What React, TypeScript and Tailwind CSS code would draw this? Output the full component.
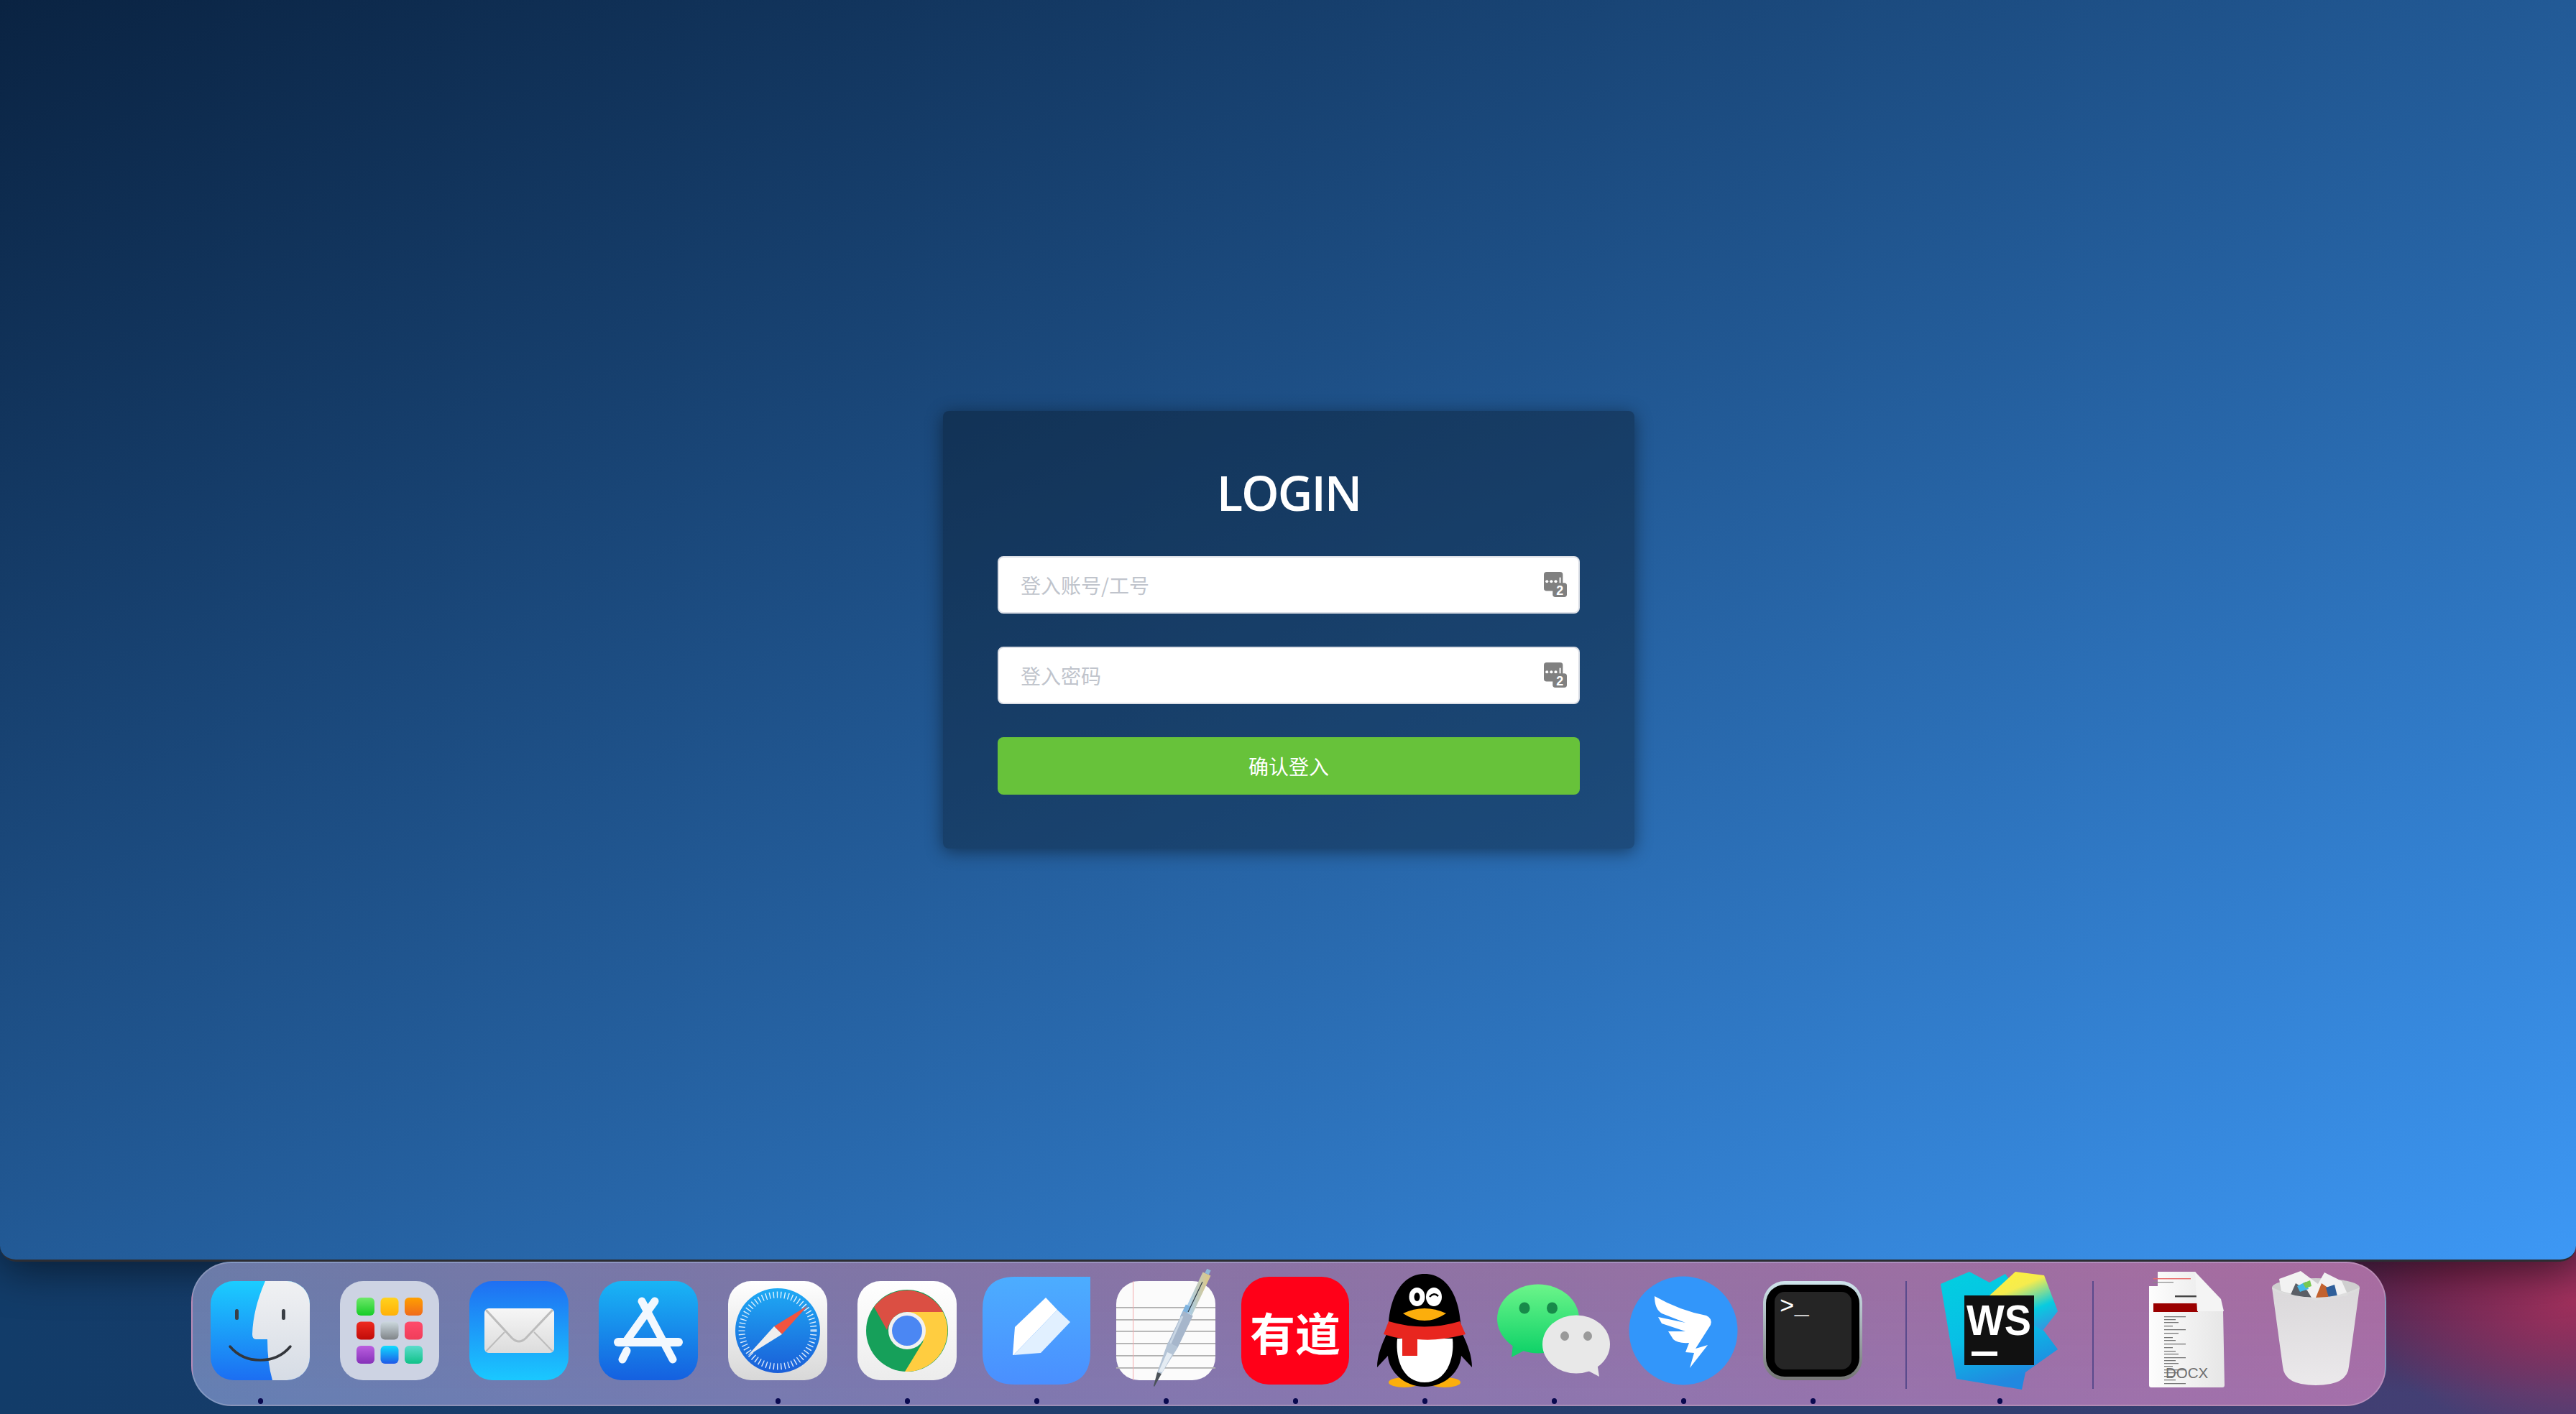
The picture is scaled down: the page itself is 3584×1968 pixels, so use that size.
import type { ReactNode } from 'react';

// squircle shared by most of the dock icons
const Tile = ({ fill, size = 138, r = 32 }: { fill: string; size?: number; r?: number }) => (
  <rect x={90 - size / 2} y={90 - size / 2} width={size} height={size} rx={r} fill={fill} />
);

const Grad = ({ id, from, to, x2 = 0, y2 = 1 }: { id: string; from: string; to: string; x2?: number; y2?: number }) => (
  <linearGradient id={id} x1="0" y1="0" x2={x2} y2={y2}>
    <stop offset="0" stopColor={from} />
    <stop offset="1" stopColor={to} />
  </linearGradient>
);

function Finder() {
  return (
    <>
      <defs>
        <Grad id="fb" from="#1bcdff" to="#1c6ef2" />
        <Grad id="fw" from="#f0f1f3" to="#d6dce5" />
        <clipPath id="fc"><rect x="21" y="21" width="138" height="138" rx="32" /></clipPath>
      </defs>
      <Tile fill="url(#fb)" />
      <path clipPath="url(#fc)" fill="url(#fw)" d="M97 21Q80 60 79 95Q79 102 84 102L100 102Q100 135 107 159L159 159L159 21Z" />
      <rect x="55" y="60" width="5" height="15" rx="2.5" fill="#3a3f46" />
      <rect x="120" y="60" width="5" height="15" rx="2.5" fill="#3a3f46" />
      <path d="M48 112Q64 131 90 131Q116 131 132 112" fill="none" stroke="#33363b" strokeWidth="3.5" strokeLinecap="round" />
    </>
  );
}

const padColors = [
  ['#6ee86a', '#16cc26'], ['#ffd21e', '#ffb008'], ['#ffa000', '#f06a1c'],
  ['#ef2a20', '#c00b08'], ['#ccd8de', '#7f8488'], ['#ff4b6b', '#f03d5a'],
  ['#bb5fe0', '#8531b8'], ['#0fdcff', '#1f58e8'], ['#5cdccc', '#10c288'],
];

function Launchpad() {
  return (
    <>
      <defs>
        {padColors.map((c, i) => <Grad key={i} id={`lp${i}`} from={c[0]} to={c[1]} />)}
      </defs>
      <Tile fill="#cdd3e3" />
      {padColors.map((_, i) => (
        <rect key={i} x={44 + (i % 3) * 33.5} y={44 + Math.floor(i / 3) * 33.5} width="25" height="25" rx="6" fill={`url(#lp${i})`} />
      ))}
    </>
  );
}

function Mail() {
  return (
    <>
      <defs>
        <Grad id="mb" from="#1f6ff2" to="#1ac8ff" />
        <Grad id="me" from="#f6f6f6" to="#dcdcdc" />
      </defs>
      <Tile fill="url(#mb)" />
      <rect x="42" y="59" width="97" height="62" rx="6" fill="url(#me)" />
      <path d="M44 61L80 100Q90 110 100 100L137 61" fill="none" stroke="#bcbcbc" strokeWidth="3" />
      <path d="M44 119L70 92M137 119L111 92" fill="none" stroke="#bcbcbc" strokeWidth="2" />
    </>
  );
}

function AppStore() {
  return (
    <>
      <defs>
        <Grad id="as" from="#19b5f5" to="#1560e0" />
      </defs>
      <Tile fill="url(#as)" />
      <g fill="none" stroke="#f2f8fe" strokeLinecap="round">
        <path d="M81 49L124 130" strokeWidth="11" />
        <path d="M99 49L59 105" strokeWidth="11" />
        <path d="M60 118L54 130" strokeWidth="11" />
        <path d="M48 106L132 106" strokeWidth="12" />
      </g>
    </>
  );
}

function Safari() {
  return (
    <>
      <defs>
        <Grad id="sf" from="#ffffff" to="#d8d8d8" />
        <Grad id="sd" from="#1eaaf4" to="#1a5ed8" />
      </defs>
      <Tile fill="url(#sf)" />
      <circle cx="90" cy="90" r="59" fill="url(#sd)" />
      <circle cx="90" cy="90" r="50" fill="none" stroke="#ffffff" strokeWidth="9" strokeDasharray="1.4 3.8" opacity="0.85" />
      <polygon points="132,55 85,84 96,95" fill="#f2543f" />
      <polygon points="48,125 85,84 96,95" fill="#eeeeee" />
    </>
  );
}

function Chrome() {
  return (
    <>
      <defs>
        <Grad id="cr" from="#ffffff" to="#ececec" />
      </defs>
      <Tile fill="url(#cr)" />
      <circle cx="90" cy="90" r="57" fill="#16a05a" />
      <path d="M44 57A57 57 0 0 1 140 64L90 64Q70 64 62 89Z" fill="#db4f43" />
      <path d="M140 64A57 57 0 0 1 87 147L112 106Q118 80 90 64Z" fill="#ffcd40" />
      <circle cx="90" cy="90" r="26" fill="#f1f1f1" />
      <circle cx="90" cy="90" r="21" fill="#4b87f3" />
    </>
  );
}

function DingDoc() {
  return (
    <>
      <defs>
        <Grad id="dd" from="#4cadff" to="#4a8fff" />
      </defs>
      <path d="M165 15L165 120Q165 165 120 165L60 165Q15 165 15 120L15 60Q15 15 60 15Z" fill="url(#dd)" />
      <polygon points="103,44 119,61 58,124 57,124 60,85" fill="#ffffff" />
      <polygon points="119,61 137,78 96,121 58,124" fill="#e1f0ff" />
    </>
  );
}

function TextEdit() {
  return (
    <>
      <defs>
        <Grad id="te" from="#a7cdec" to="#d8c88f" x2={1} y2={0} />
      </defs>
      <Tile fill="#fbfbfb" />
      {[57, 74, 90, 107, 124, 141].map((y) => <rect key={y} x="21" y={y} width="138" height="1.8" fill="#b0b0b0" />)}
      <rect x="44" y="21" width="1" height="138" fill="#f3a9ad" />
      <path d="M147 11L121 66" stroke="url(#te)" strokeWidth="12" />
      <path d="M121 55L113 72" stroke="#7fb4e0" strokeWidth="7" />
      <path d="M150 5L147 11" stroke="#8fb9d8" strokeWidth="6" />
      <path d="M141 22L121 64" stroke="#2e3a44" strokeWidth="1.2" />
      <path d="M121 66L100 110" stroke="#a6b6cb" strokeWidth="15" />
      <path d="M113 70L96 108" stroke="#c9d6e4" strokeWidth="3" />
      <polygon points="93,106 107,113 84,150 78,148" fill="#b4c4d6" />
      <polygon points="92,120 99,123 85,148 80,147" fill="#e4ecf3" />
      <polygon points="78,148 84,150 74,168 73,167" fill="#4b5258" />
    </>
  );
}

function Youdao() {
  return (
    <>
      <Tile fill="#ff0018" size={150} r={38} />
      <text x="90" y="118" textAnchor="middle" fontSize="63" fontWeight="700" fill="#fff" fontFamily='"Noto Sans CJK SC", sans-serif'>有道</text>
    </>
  );
}

function QQ() {
  return (
    <>
      <ellipse cx="62" cy="162" rx="22" ry="7" fill="#fcae0c" />
      <ellipse cx="118" cy="162" rx="22" ry="7" fill="#fcae0c" />
      <path d="M90 11C60 11 43 40 40 78L37 95C30 110 24 125 24 141L39 125C40 145 60 168 90 168C120 168 140 145 141 125L156 141C156 125 150 110 143 95L140 78C137 40 120 11 90 11Z" fill="#000" />
      <path d="M52 101L129 101C132 130 120 162 90 162C60 162 49 130 52 101Z" fill="#fff" />
      <path d="M40 77Q90 92 139 77L147 95Q110 105 80 102L80 125L59 125L59 101Q45 99 33 95Z" fill="#e8261f" />
      <ellipse cx="79.5" cy="43" rx="11" ry="13" fill="#fff" />
      <ellipse cx="79.5" cy="43" rx="4" ry="6" fill="#000" />
      <ellipse cx="103" cy="43" rx="11" ry="13" fill="#fff" />
      <path d="M97 43Q103 36 109 42" fill="none" stroke="#000" strokeWidth="2.5" />
      <path d="M60 66Q90 52 120 66Q105 76 90 76Q75 76 60 66Z" fill="#fcae0c" />
    </>
  );
}

function WeChat() {
  return (
    <>
      <defs>
        <Grad id="wc" from="#6cf58a" to="#0fd268" />
      </defs>
      <path d="M33 108L31 127L48 118Z" fill="#16d26c" />
      <ellipse cx="68" cy="73.5" rx="57" ry="48" fill="url(#wc)" />
      <ellipse cx="49" cy="58.5" rx="7.5" ry="8" fill="#178a4a" />
      <ellipse cx="87.5" cy="58.5" rx="7.5" ry="8" fill="#178a4a" />
      <path d="M150 135L153 154L136 145Z" fill="#e8e8e8" />
      <ellipse cx="121" cy="109" rx="47" ry="40.5" fill="#e8e8e8" />
      <ellipse cx="105" cy="97.5" rx="6" ry="6.5" fill="#9a9a9a" />
      <ellipse cx="137" cy="97.5" rx="6" ry="6.5" fill="#9a9a9a" />
    </>
  );
}

function DingTalk() {
  return (
    <>
      <circle cx="90" cy="90" r="75.5" fill="#3296fa" />
      <path d="M50 42Q85 62 122 69Q131 73 128 82L107 115L124 110L99 142L105 121L93 120L98 107Q82 108 76 102L69 91L93 91L60 80L55 71L93 79L60 66Q50 60 50 42Z" fill="#fff" />
    </>
  );
}

function Terminal() {
  return (
    <>
      <defs>
        <Grad id="tm" from="#cfe4ec" to="#757575" />
      </defs>
      <Tile fill="url(#tm)" r={30} />
      <rect x="25" y="26" width="130" height="128" rx="26" fill="#000" />
      <rect x="37" y="36" width="107" height="108" rx="14" fill="#252525" />
      <text x="44" y="66" fontSize="34" fill="#fff" fontFamily='"Liberation Mono", monospace'>&gt;_</text>
    </>
  );
}

function WebStorm() {
  return (
    <>
      <defs>
        <linearGradient id="ws1" x1="0" y1="0" x2="0.3" y2="1">
          <stop offset="0" stopColor="#02cfe0" />
          <stop offset="0.6" stopColor="#08bfe6" />
          <stop offset="1" stopColor="#2188e0" />
        </linearGradient>
        <linearGradient id="ws2" x1="0.2" y1="0" x2="0.7" y2="1">
          <stop offset="0" stopColor="#fff03c" />
          <stop offset="0.3" stopColor="#f5ec4e" />
          <stop offset="0.7" stopColor="#08cbe0" />
          <stop offset="1" stopColor="#2f9ae0" />
        </linearGradient>
      </defs>
      <polygon points="8,25 48,8 76,23 98,11 150,88 171,116 126,148 121,172 30,157" fill="url(#ws1)" />
      <polygon points="112,8 152,13 171,63 150,90 75,42" fill="url(#ws2)" />
      <rect x="41" y="41" width="97" height="97" fill="#111" />
      <text x="44" y="96" fontSize="60" fontWeight="700" fill="#fff" textLength="90" lengthAdjust="spacingAndGlyphs" fontFamily='"Liberation Sans", sans-serif'>WS</text>
      <rect x="51" y="119" width="36" height="6" fill="#fff" />
    </>
  );
}

const docLines = [70, 74, 78, 83, 88, 93, 99, 103, 108, 113, 118, 122, 127, 131, 135, 139, 144, 148, 153, 158, 163];

function Docx() {
  return (
    <>
      <defs>
        <Grad id="dx" from="#fdfdfd" to="#e6e6e6" x2={1} y2={0} />
      </defs>
      <path d="M50 8L102 8L141 63L143 166Q143 169 140 169L41 169Q38 169 38 166L38 28L50 28Z" fill="url(#dx)" />
      <rect x="44" y="17" width="52" height="1.4" fill="#e86a6a" />
      <rect x="44" y="22" width="28" height="1.2" fill="#888" />
      <rect x="74" y="41" width="30" height="2.4" fill="#444" />
      <rect x="44" y="52" width="62" height="12" fill="#9a0000" />
      <polygon points="102,8 138,46 142,63 105,63" fill="#f4f4f4" />
      {docLines.map((y, i) => (
        <rect key={y} x="59" y={y} width={i % 4 === 0 ? 30 : 12 + (i % 3) * 4} height="1.3" fill="#777" />
      ))}
      <text x="61" y="156" fontSize="20.5" fill="#6f6f6f" fontFamily='"Liberation Sans", sans-serif'>DOCX</text>
    </>
  );
}

function Trash() {
  return (
    <>
      <defs>
        <Grad id="tr" from="#dcdcdc" to="#eeeeee" />
      </defs>
      <ellipse cx="90" cy="30" rx="61" ry="13" fill="#cfcfcf" />
      <polygon points="42,35 39,18 69,7 93,25 102,9 126,21 135,41 90,48" fill="#f2f2f2" />
      <polygon points="54,42 62,24 78,34 84,44" fill="#5b5f66" />
      <polygon points="64,28 76,22 80,32 68,36" fill="#45b8e8" />
      <polygon points="72,24 82,20 84,28 76,31" fill="#78c850" />
      <polygon points="90,44 98,24 112,34 106,46" fill="#c2622e" />
      <polygon points="104,30 116,26 120,42 108,44" fill="#2f5f9a" />
      <path d="M29 30Q90 58 151 30L136 140Q134 166 90 166Q46 166 44 140Z" fill="url(#tr)" opacity="0.96" />
    </>
  );
}

type DockItem = { name: string; icon: ReactNode; running?: boolean };

const apps: DockItem[] = [
  { name: 'finder', icon: <Finder />, running: true },
  { name: 'launchpad', icon: <Launchpad /> },
  { name: 'mail', icon: <Mail /> },
  { name: 'appstore', icon: <AppStore /> },
  { name: 'safari', icon: <Safari />, running: true },
  { name: 'chrome', icon: <Chrome />, running: true },
  { name: 'dingdoc', icon: <DingDoc />, running: true },
  { name: 'textedit', icon: <TextEdit />, running: true },
  { name: 'youdao', icon: <Youdao />, running: true },
  { name: 'qq', icon: <QQ />, running: true },
  { name: 'wechat', icon: <WeChat />, running: true },
  { name: 'dingtalk', icon: <DingTalk />, running: true },
  { name: 'terminal', icon: <Terminal />, running: true },
];

function DockCell({ item }: { item: DockItem }) {
  return (
    <div className="flex w-[180px] flex-col items-center pt-[4px]">
      <svg width="180" height="180" viewBox="0 0 180 180">{item.icon}</svg>
      <div className={`mt-[4px] h-2 w-[7px] rounded-full ${item.running ? 'bg-[#0a0a50]' : 'bg-transparent'}`} />
    </div>
  );
}

const Divider = () => (
  <div className="flex w-[80px] justify-center pt-[25px]">
    <div className="h-[150px] w-[2px] bg-[#5a4a8c]" />
  </div>
);

function KeyIcon() {
  return (
    <svg className="absolute right-[18px] top-[22px]" width="32" height="36" viewBox="0 0 34 38">
      <rect x="0" y="0" width="28" height="28" rx="4" fill="#808080" />
      <circle cx="4.5" cy="14" r="2.2" fill="#fff" />
      <circle cx="11" cy="14" r="2.2" fill="#fff" />
      <circle cx="17.5" cy="14" r="2.2" fill="#fff" />
      <rect x="23" y="8" width="2" height="11" fill="#fff" />
      <rect x="13" y="16" width="21" height="21" rx="4" fill="#808080" />
      <text x="23.5" y="34" textAnchor="middle" fontSize="19" fontWeight="700" fill="#fff" fontFamily='"Liberation Sans", sans-serif'>2</text>
    </svg>
  );
}

function Field({ placeholder }: { placeholder: string }) {
  return (
    <div className="relative h-[80px] w-full">
      <input
        placeholder={placeholder}
        className="h-full w-full rounded-lg border-2 border-[#dcdfe6] bg-white px-[30px] text-[28px] text-[#606266] outline-none placeholder:text-[#c0c4cc]"
      />
      <KeyIcon />
    </div>
  );
}

export default function App() {
  return (
    <div
      className="h-[1968px] w-[3584px] overflow-hidden bg-[radial-gradient(ellipse_300px_190px_at_3584px_1810px,#a0305c,transparent),radial-gradient(ellipse_620px_170px_at_3430px_1770px,#5f1c44,transparent),linear-gradient(90deg,#123c69,#2a3e6e_72%,#4a3f75)]"
      style={{ fontFamily: '"Noto Sans CJK SC", "Open Sans", sans-serif' }}
    >
      <div className="flex h-[1756px] items-center justify-center rounded-b-[22px] border-b-[3px] border-[#2c2d33] bg-gradient-to-br from-[#0a2342] to-[#3d98f5] shadow-[0_10px_60px_rgba(0,0,0,0.55)]">
        <div className="ml-[2px] flex h-[609px] w-[962px] flex-col items-center rounded-lg bg-black/30 px-[76px] shadow-[0_4px_24px_rgba(0,0,0,0.45)]">
          <h1 className="mt-[71px] mb-[47px] h-[84px] text-[67px] leading-[84px] font-semibold tracking-[-2px] text-white" style={{ fontFamily: '"Open Sans", sans-serif' }}>
            LOGIN
          </h1>
          <div className="flex w-full flex-col gap-[46px]">
            <Field placeholder="登入账号/工号" />
            <Field placeholder="登入密码" />
            <button className="h-[80px] w-full rounded-lg bg-[#67c23a] text-[28px] text-white">确认登入</button>
          </div>
        </div>
      </div>
      <div className="ml-[266px] flex h-[201px] w-[3054px] rounded-[56px] border-2 border-white/20 bg-[linear-gradient(180deg,rgba(130,110,150,0.25),rgba(100,130,200,0.2)),linear-gradient(90deg,#647fae,#8476aa_35%,#9a72a8_65%,#b56ba3)] pl-[4px]">
        {apps.map((a) => <DockCell key={a.name} item={a} />)}
        <Divider />
        <DockCell item={{ name: 'webstorm', icon: <WebStorm />, running: true }} />
        <Divider />
        <DockCell item={{ name: 'docx', icon: <Docx /> }} />
        <DockCell item={{ name: 'trash', icon: <Trash /> }} />
      </div>
    </div>
  );
}
